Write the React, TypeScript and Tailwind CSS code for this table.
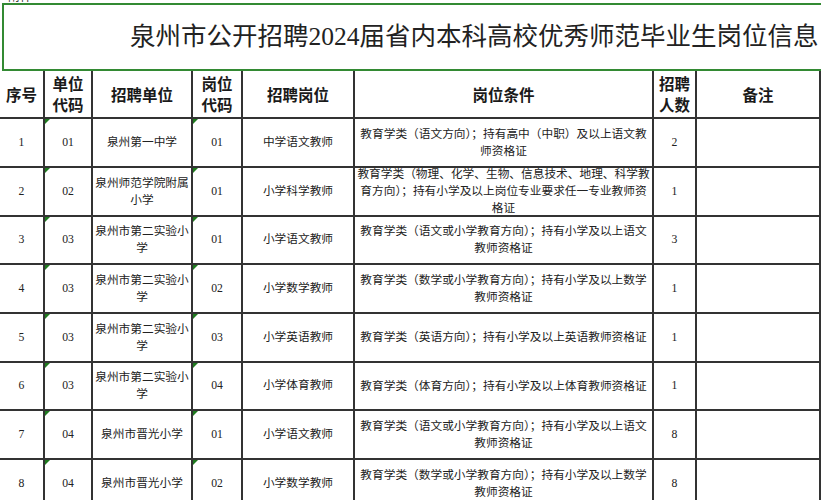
import React from "react";

type Row = {
  no: string;
  unitCode: string;
  unit: string[];
  posCode: string;
  pos: string;
  cond: string[];
  count: string;
  h: string;
};

const yuwen = ["教育学类（语文或小学教育方向）；持有小学及以上语文", "教师资格证"];
const shuxue = ["教育学类（数学或小学教育方向）；持有小学及以上数学", "教师资格证"];
const erShi = ["泉州市第二实验小", "学"];

const rows: Row[] = [
  { no: "1", unitCode: "01", unit: ["泉州第一中学"], posCode: "01", pos: "中学语文教师", cond: ["教育学类（语文方向）；持有高中（中职）及以上语文教", "师资格证"], count: "2", h: "h-[49px]" },
  { no: "2", unitCode: "02", unit: ["泉州师范学院附属", "小学"], posCode: "01", pos: "小学科学教师", cond: ["教育学类（物理、化学、生物、信息技术、地理、科学教", "育方向）；持有小学及以上岗位专业要求任一专业教师资", "格证"], count: "1", h: "h-[49px]" },
  { no: "3", unitCode: "03", unit: erShi, posCode: "01", pos: "小学语文教师", cond: yuwen, count: "3", h: "h-[48px]" },
  { no: "4", unitCode: "03", unit: erShi, posCode: "02", pos: "小学数学教师", cond: shuxue, count: "1", h: "h-[49px]" },
  { no: "5", unitCode: "03", unit: erShi, posCode: "03", pos: "小学英语教师", cond: ["教育学类（英语方向）；持有小学及以上英语教师资格证"], count: "1", h: "h-[49px]" },
  { no: "6", unitCode: "03", unit: erShi, posCode: "04", pos: "小学体育教师", cond: ["教育学类（体育方向）；持有小学及以上体育教师资格证"], count: "1", h: "h-[48px]" },
  { no: "7", unitCode: "04", unit: ["泉州市晋光小学"], posCode: "01", pos: "小学语文教师", cond: yuwen, count: "8", h: "h-[49px]" },
  { no: "8", unitCode: "04", unit: ["泉州市晋光小学"], posCode: "02", pos: "小学数学教师", cond: shuxue, count: "8", h: "h-[49px]" },
];

const cols = "grid grid-cols-[45px_48px_100px_50px_112px_299px_43px_124px]";
const cell = "border-r-2 border-b-2 border-[#333] flex flex-col items-center justify-center text-center overflow-hidden";
const serif = { fontFamily: '"Liberation Serif", "Noto Sans CJK SC", serif' };

function Mark() {
  // excel "number stored as text" marker
  return <span className="absolute left-0 top-0 w-0 h-0 border-t-[5px] border-r-[5px] border-t-[#1f7a1f] border-r-transparent" />;
}

function Lines({ lines }: { lines: string[] }) {
  return (
    <>
      {lines.map((l, i) => (
        <span key={i} className="block whitespace-nowrap leading-[17px]">{l}</span>
      ))}
    </>
  );
}

export default function App() {
  return (
    <div className="w-[821px] h-[500px] overflow-hidden bg-white">
      <div className="h-[3px] overflow-hidden pl-[8px] text-[12px] text-[#333]" style={serif}>
        <div className="-mt-[12px]">附件</div>
      </div>

      <div className="ml-[2px] h-[68px] border-l-2 border-t-2 border-b-2 border-[#338a33] flex items-center pl-[126px] overflow-hidden">
        <span className="whitespace-nowrap text-[25.5px] text-[#222] leading-none" style={serif}>
          泉州市公开招聘2024届省内本科高校优秀师范毕业生岗位信息
        </span>
      </div>

      <div className={`${cols} h-[48px] text-[15.5px] font-bold text-[#1a1a1a] leading-[21px]`} style={{ fontFamily: '"Noto Sans CJK SC", sans-serif' }}>
        <div className={cell}>序号</div>
        <div className={cell}><span>单位</span><span>代码</span></div>
        <div className={cell}>招聘单位</div>
        <div className={cell}><span>岗位</span><span>代码</span></div>
        <div className={cell}>招聘岗位</div>
        <div className={cell}>岗位条件</div>
        <div className={cell}><span>招聘</span><span>人数</span></div>
        <div className={cell}>备注</div>
      </div>

      {rows.map((r) => (
        <div key={r.no} className={`${cols} ${r.h} text-[11.7px] text-[#222]`} style={serif}>
          <div className={cell}>{r.no}</div>
          <div className={`${cell} relative`}><Mark />{r.unitCode}</div>
          <div className={cell}><Lines lines={r.unit} /></div>
          <div className={`${cell} relative`}><Mark />{r.posCode}</div>
          <div className={cell}>{r.pos}</div>
          <div className={cell}><Lines lines={r.cond} /></div>
          <div className={cell}>{r.count}</div>
          <div className={cell}></div>
        </div>
      ))}
    </div>
  );
}
